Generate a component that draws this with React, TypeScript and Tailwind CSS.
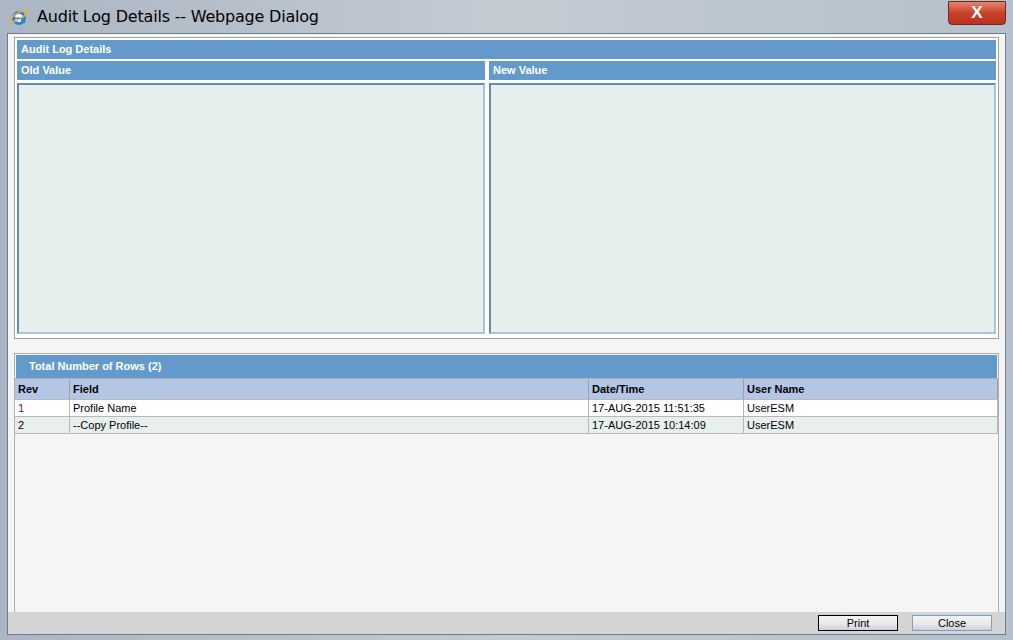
export default function App() {
  const rows = [
    { rev: '1', field: 'Profile Name', date: '17-AUG-2015 11:51:35', user: 'UserESM', bg: 'bg-white', revc: 'text-[#800080]' },
    { rev: '2', field: '--Copy Profile--', date: '17-AUG-2015 10:14:09', user: 'UserESM', bg: 'bg-[#e8f0ee]', revc: 'text-black' },
  ];
  return (
    <div className="w-[1013px] h-[640px] flex flex-col bg-gradient-to-r from-[#aab6c3] via-[#c3cbd3] to-[#b4c0cb] font-[Liberation_Sans,Arial,sans-serif] overflow-hidden">
      {/* Title bar */}
      <div className="h-[33px] flex items-center pl-[9px] pr-[7px] shrink-0">
        <svg width="20" height="20" viewBox="0 0 20 20">
          <circle cx="10" cy="11" r="7" fill="#2f83d6" />
          <circle cx="10" cy="11" r="4" fill="#fff" />
          <rect x="6" y="10.5" width="8" height="1.6" fill="#2f83d6" />
          <rect x="12" y="12" width="4" height="4" fill="#2f83d6" />
          <ellipse cx="10" cy="9" rx="10" ry="3" fill="none" stroke="#e7b23a" strokeWidth="1.4" transform="rotate(-30 10 10)" />
        </svg>
        <span className="ml-[8px] text-[16px] text-black font-[DejaVu_Sans,sans-serif] tracking-[-0.2px]">Audit Log Details -- Webpage Dialog</span>
        <div className="flex-1" />
        <div className="w-[58px] h-[24px] -mt-[8px] rounded-b-[4px] border border-[#6b2a22] bg-gradient-to-b from-[#e4846f] via-[#c9412a] to-[#b8321f] flex items-center justify-center text-white font-bold text-[17px]">X</div>
      </div>
      {/* Client */}
      <div className="flex-1 mx-[7px] mb-[5px] border border-[#6f7c89] bg-[#f5f5f5] flex flex-col">
        <div className="flex-1 flex flex-col px-[6px] pt-[3px]">
          {/* Top panel */}
          <div className="h-[302px] border border-[#a0a0a0] bg-white p-[2px] flex flex-col gap-[2px]">
            <div className="h-[19px] bg-[#639acb] text-white text-[11px] font-bold flex items-center pl-[4px]">Audit Log Details</div>
            <div className="flex-1 flex gap-[4px]">
              {['Old Value', 'New Value'].map((t, i) => (
                <div key={t} className={`${i === 0 ? 'w-[468px]' : 'flex-1'} flex flex-col gap-[3px]`}>
                  <div className="h-[19px] bg-[#639acb] text-white text-[11px] font-bold flex items-center pl-[4px]">{t}</div>
                  <div className="flex-1 mb-[2px] border-2 border-t-[#5a8cc0] border-l-[#5a8cc0] border-r-[#a8c4df] border-b-[#a8c4df] bg-[#e7efed]" />
                </div>
              ))}
            </div>
          </div>
          {/* Bottom panel */}
          <div className="mt-[14px] flex-1 border border-[#b0b0b0] border-b-0 flex flex-col">
            <div className="h-[23px] mx-[1px] mt-[1px] bg-[#639acb] text-white text-[11px] font-bold flex items-center pl-[13px]">Total Number of Rows (2)</div>
            <div className="grid grid-cols-[55px_519px_155px_1fr] text-[11px] border-t border-[#b0b0b0] bg-white">
              {['Rev', 'Field', 'Date/Time', 'User Name'].map((h) => (
                <div key={h} className="h-[20px] bg-[#b4c6e6] border-r border-[#a0a0a0] pl-[3px] flex items-center font-bold">{h}</div>
              ))}
              {rows.map((r) => (
                [r.rev, r.field, r.date, r.user].map((c, i) => (
                  <div key={r.rev + i} className={`h-[17px] ${r.bg} border-t border-r border-[#b8b8b8] pl-[3px] flex items-center ${i === 0 ? r.revc : 'text-black'}`}>{c}</div>
                ))
              ))}
            </div>
            <div className="border-t border-[#b8b8b8]" />
          </div>
        </div>
        <div className="h-[22px] bg-[#d4d4d4] flex items-center justify-end gap-[14px] pr-[13px] shrink-0">
          {['Print', 'Close'].map((b, i) => (
            <div key={b} className={`w-[80px] h-[16px] ${i === 0 ? 'border border-black' : 'border border-[#7aa1c8]'} bg-gradient-to-b from-[#f4f4f4] via-[#ebebeb] to-[#d3cfe0] text-[11px] flex items-center justify-center`}>{b}</div>
          ))}
        </div>
      </div>
    </div>
  );
}
